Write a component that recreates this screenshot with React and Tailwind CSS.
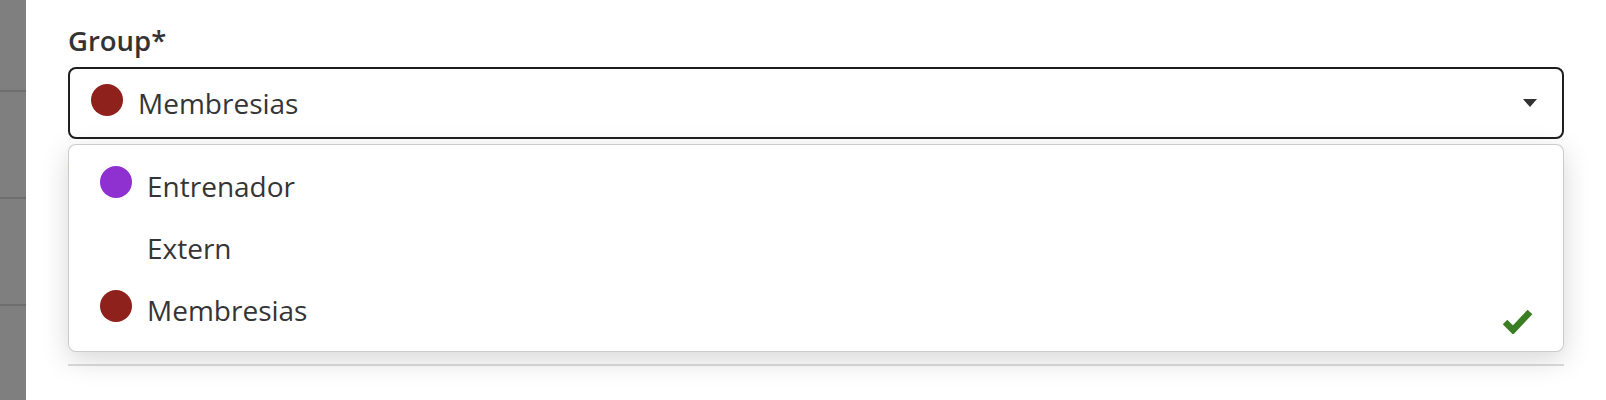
const OPTIONS = [
  { id: 'entrenador', label: 'Entrenador', color: '#8f30d1' },
  { id: 'extern', label: 'Extern', color: null },
  { id: 'membresias', label: 'Membresias', color: '#8e211b' },
];

const SELECTED = 'membresias';

function CheckMark() {
  return (
    <svg width="30" height="26" viewBox="0 0 30 26" className="shrink-0">
      <polyline points="2,14 10,22 27,4" fill="none" stroke="#3a7d22" strokeWidth="6.5" />
    </svg>
  );
}

export default function App() {
  const selected = OPTIONS.find((o) => o.id === SELECTED);

  return (
    <div className="flex h-[400px] w-full bg-white font-['Open_Sans',sans-serif] text-[#353535] overflow-hidden">
      {/* ── Side strip ── */}
      <aside className="w-[26px] shrink-0 bg-[#7f7f7f] flex flex-col">
        <div className="h-[90px]" />
        <div className="h-[2px] bg-[#6e6e6e]" />
        <div className="h-[105px]" />
        <div className="h-[2px] bg-[#6e6e6e]" />
        <div className="h-[105px]" />
        <div className="h-[2px] bg-[#6e6e6e]" />
      </aside>

      {/* ── Form ── */}
      <main className="flex-1 pl-[42px] pr-[42px] pt-[21px]">
        <label className="block text-[27.5px] font-semibold leading-[39px] text-[#333]">Group*</label>

        <div className="relative mt-[7px]">
          <div className="flex h-[72px] items-center rounded-[8px] border-2 border-[#1e1e1e] bg-white pl-[21px] pr-[25px]">
            <span
              className="mb-[6px] h-[32px] w-[32px] shrink-0 rounded-full"
              style={{ backgroundColor: selected.color }}
            />
            <span className="ml-[15px] text-[28px] leading-none">{selected.label}</span>
            <span className="ml-auto h-0 w-0 border-x-[7.5px] border-t-[8px] border-x-transparent border-t-[#333]" />
          </div>

          {/* underlying field, hidden by the open menu */}
          <div className="mt-[16px] text-[28px] leading-[39px] text-[#333]">Tag</div>
          <div className="mt-[3px] h-[66px] rounded-[8px] border-2 border-[#888]" />
          <div className="mt-[26px] text-[28px] leading-[39px] text-[#333]">Note</div>
          <div className="mt-[36px] h-[2px] bg-[#dddddd]" />

          {/* ── Open menu ── */}
          <ul className="absolute left-0 right-0 top-[77px] rounded-[8px] border border-black/20 bg-white py-[10px] shadow-[0_8px_28px_rgba(0,0,0,0.16)]">
            {OPTIONS.map((opt) => (
              <li key={opt.id} className="flex h-[62px] items-center pl-[31px] pr-[30px]">
                {opt.color ? (
                  <span
                    className="mb-[9px] h-[32px] w-[32px] shrink-0 rounded-full"
                    style={{ backgroundColor: opt.color }}
                  />
                ) : (
                  <span className="w-[32px] shrink-0" />
                )}
                <span className="ml-[15px] text-[28px] leading-none">{opt.label}</span>
                {opt.id === SELECTED && (
                  <span className="ml-auto mt-[22px] flex">
                    <CheckMark />
                  </span>
                )}
              </li>
            ))}
          </ul>
        </div>
      </main>
    </div>
  );
}
